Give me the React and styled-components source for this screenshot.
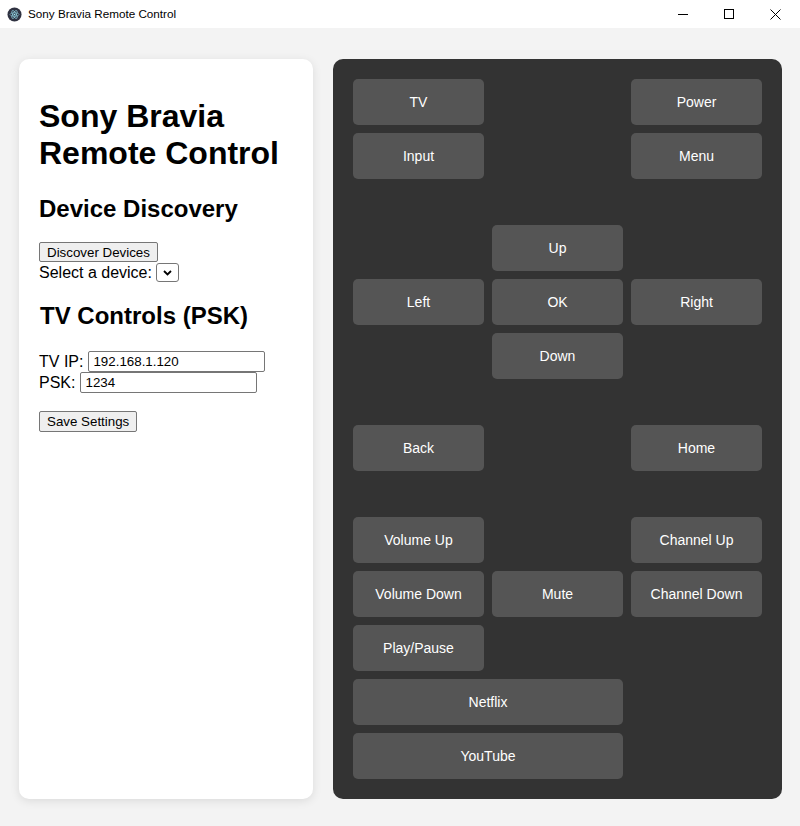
import styled, { createGlobalStyle } from "styled-components";

const GlobalStyle = createGlobalStyle`
  html, body {
    margin: 0;
    padding: 0;
    background: #f3f3f3;
    font-family: "Liberation Sans", Arial, sans-serif;
  }
  * {
    box-sizing: border-box;
  }
`;

const TitleBar = styled.div`
  height: 28px;
  background: #ffffff;
  display: flex;
  align-items: center;
  padding-right: 2px;
  font-family: "Liberation Sans", Arial, sans-serif;
  font-size: 11.7px;
  color: #000;
`;

const AppIcon = styled.div`
  width: 28px;
  height: 28px;
  display: flex;
  align-items: center;
  justify-content: center;
`;

const WindowTitle = styled.div`
  flex: 1;
  line-height: 28px;
`;

const WindowButton = styled.div`
  width: 46px;
  height: 28px;
  display: flex;
  align-items: center;
  justify-content: center;
`;

const Main = styled.div`
  height: 798px;
  padding: 31px 18px 27px 19px;
  display: flex;
  gap: 20px;
`;

const Sidebar = styled.div`
  width: 294px;
  background: #ffffff;
  border-radius: 10px;
  box-shadow: 0 2px 10px rgba(0, 0, 0, 0.1);
  padding: 20px;
  color: #000;
`;

const Title = styled.h1`
  font-size: 32px;
  line-height: 37px;
  font-weight: bold;
  margin: 19px 0 23px;
`;

const SectionTitle = styled.h2`
  font-size: 24px;
  line-height: 28px;
  font-weight: bold;
  margin: ${(p) => p.$margin || "0"};
  padding-left: ${(p) => p.$indent || "0"};
`;

const NativeButton = styled.button`
  display: block;
  height: ${(p) => p.$height || "20px"};
  padding: 0 7px;
  font-family: "Liberation Sans", Arial, sans-serif;
  font-size: 13.33px;
  color: #000;
  background: #efefef;
  border: 1px solid #767676;
  border-radius: 2px;
  margin: ${(p) => p.$margin || "0"};
`;

const SelectRow = styled.div`
  display: flex;
  align-items: center;
  height: 21px;
  font-size: 16px;
  gap: 4px;
`;

const DeviceSelect = styled.div`
  width: 23px;
  height: 19px;
  border: 1px solid #767676;
  border-radius: 3px;
  background: #fff;
  display: flex;
  align-items: center;
  justify-content: center;
`;

const FieldRow = styled.div`
  display: flex;
  align-items: center;
  height: 21px;
  font-size: 16px;
  gap: 5px;
`;

const TextInput = styled.input`
  width: 177px;
  height: 21px;
  padding: 0 4px;
  border: 1px solid #767676;
  border-radius: 2px;
  font-family: "Liberation Sans", Arial, sans-serif;
  font-size: 13.33px;
  color: #000;
  outline: none;
`;

const Remote = styled.div`
  flex: 1;
  background: #333333;
  border-radius: 10px;
  padding: 20px;
  display: flex;
  flex-direction: column;
  gap: 46px;
`;

const ButtonGroup = styled.div`
  display: grid;
  grid-template-columns: repeat(3, 131px);
  grid-auto-rows: 46px;
  gap: 8px;
`;

const RemoteButton = styled.button`
  grid-column: ${(p) => (p.$col ? `${p.$col} / span ${p.$span || 1}` : "auto")};
  background: #555555;
  color: #ffffff;
  border: none;
  border-radius: 5px;
  font-family: "Liberation Sans", Arial, sans-serif;
  font-size: 14px;
  display: flex;
  align-items: center;
  justify-content: center;
  padding: 0;
  cursor: pointer;
`;

const groups = [
  [
    { label: "TV", col: 1 },
    { label: "Power", col: 3 },
    { label: "Input", col: 1 },
    { label: "Menu", col: 3 },
  ],
  [
    { label: "Up", col: 2 },
    { label: "Left", col: 1 },
    { label: "OK" },
    { label: "Right" },
    { label: "Down", col: 2 },
  ],
  [
    { label: "Back", col: 1 },
    { label: "Home", col: 3 },
  ],
  [
    { label: "Volume Up", col: 1 },
    { label: "Channel Up", col: 3 },
    { label: "Volume Down", col: 1 },
    { label: "Mute" },
    { label: "Channel Down" },
    { label: "Play/Pause", col: 1 },
    { label: "Netflix", col: 1, span: 2 },
    { label: "YouTube", col: 1, span: 2 },
  ],
];

export default function App() {
  return (
    <>
      <GlobalStyle />
      <TitleBar>
        <AppIcon>
          <svg width="15" height="15" viewBox="0 0 16 16">
            <circle cx="8" cy="8" r="7.5" fill="#2f3241" />
            <g fill="none" stroke="#9feaf9" strokeWidth="0.7" opacity="0.85">
              <ellipse cx="8" cy="8" rx="4.8" ry="1.9" />
              <ellipse cx="8" cy="8" rx="4.8" ry="1.9" transform="rotate(60 8 8)" />
              <ellipse cx="8" cy="8" rx="4.8" ry="1.9" transform="rotate(120 8 8)" />
            </g>
            <circle cx="8" cy="8" r="0.9" fill="#9feaf9" />
          </svg>
        </AppIcon>
        <WindowTitle>Sony Bravia Remote Control</WindowTitle>
        <WindowButton>
          <svg width="10" height="10" viewBox="0 0 10 10">
            <line x1="0" y1="5.5" x2="10" y2="5.5" stroke="#000" strokeWidth="1" />
          </svg>
        </WindowButton>
        <WindowButton>
          <svg width="10" height="10" viewBox="0 0 10 10">
            <rect x="0.5" y="0.5" width="9" height="9" fill="none" stroke="#000" strokeWidth="1" />
          </svg>
        </WindowButton>
        <WindowButton>
          <svg width="11" height="11" viewBox="0 0 11 11">
            <path d="M0.5 0.5 L10.5 10.5 M10.5 0.5 L0.5 10.5" stroke="#000" strokeWidth="1" />
          </svg>
        </WindowButton>
      </TitleBar>
      <Main>
        <Sidebar>
          <Title>Sony Bravia Remote Control</Title>
          <SectionTitle>Device Discovery</SectionTitle>
          <NativeButton $margin="19px 0 0">Discover Devices</NativeButton>
          <SelectRow>
            Select a device:
            <DeviceSelect>
              <svg width="9" height="6" viewBox="0 0 9 6">
                <path d="M1 1 L4.5 4.5 L8 1" fill="none" stroke="#000" strokeWidth="1.8" />
              </svg>
            </DeviceSelect>
          </SelectRow>
          <SectionTitle $margin="19px 0 21px" $indent="1px">
            TV Controls (PSK)
          </SectionTitle>
          <FieldRow>
            TV IP:
            <TextInput defaultValue="192.168.1.120" />
          </FieldRow>
          <FieldRow>
            PSK:
            <TextInput defaultValue="1234" />
          </FieldRow>
          <NativeButton $margin="18px 0 0" $height="21px">
            Save Settings
          </NativeButton>
        </Sidebar>
        <Remote>
          {groups.map((group, i) => (
            <ButtonGroup key={i}>
              {group.map((b) => (
                <RemoteButton key={b.label} $col={b.col} $span={b.span}>
                  {b.label}
                </RemoteButton>
              ))}
            </ButtonGroup>
          ))}
        </Remote>
      </Main>
    </>
  );
}
